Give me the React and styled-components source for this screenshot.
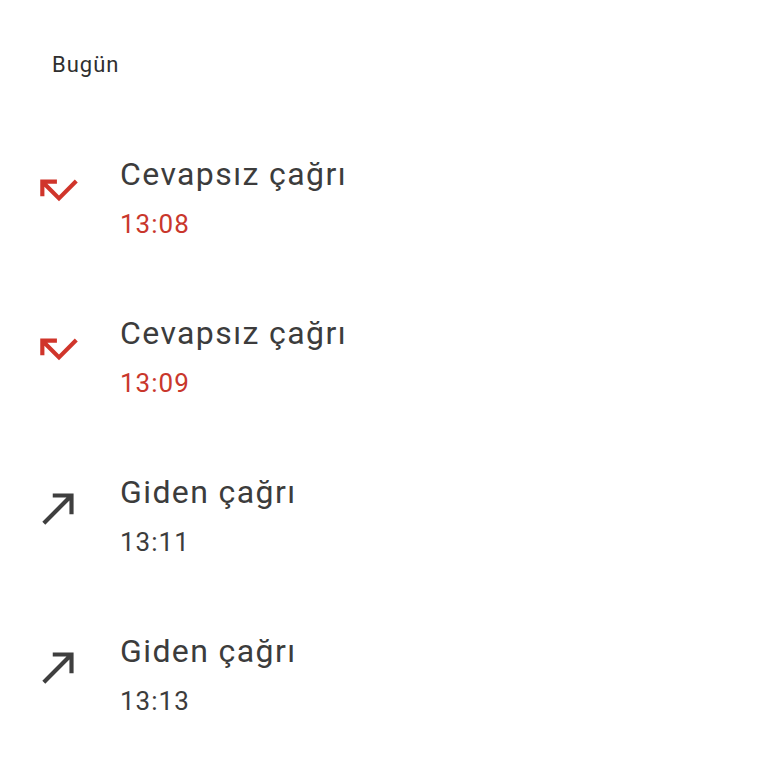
import React from 'react';
import styled, { createGlobalStyle } from 'styled-components';

const calls = [
  { type: 'missed', label: 'Cevapsız çağrı', time: '13:08' },
  { type: 'missed', label: 'Cevapsız çağrı', time: '13:09' },
  { type: 'outgoing', label: 'Giden çağrı', time: '13:11' },
  { type: 'outgoing', label: 'Giden çağrı', time: '13:13' },
];

function MissedIcon() {
  return (
    <svg viewBox="0 0 24 24" width="50" height="50" fill="#d0352b">
      <path d="M19.59 7L12 14.59 6.41 9H11V7H3v8h2v-4.59l7 7 9-9z" />
    </svg>
  );
}

function OutgoingIcon() {
  return (
    <svg viewBox="0 0 24 24" width="50" height="50" fill="#3f3f3f">
      <path d="M9 5v2h6.59L4 18.59 5.41 20 17 8.41V15h2V5z" />
    </svg>
  );
}

function App() {
  return (
    <>
      <GlobalStyle />
      <Page>
        <DayHeader>Bugün</DayHeader>
        <List>
          {calls.map((c, i) => (
            <Row key={i}>
              <IconBox>{c.type === 'missed' ? <MissedIcon /> : <OutgoingIcon />}</IconBox>
              <Texts>
                <Title>{c.label}</Title>
                <Time $missed={c.type === 'missed'}>{c.time}</Time>
              </Texts>
            </Row>
          ))}
        </List>
      </Page>
    </>
  );
}

const GlobalStyle = createGlobalStyle`
  body {
    margin: 0;
    background: #ffffff;
    font-family: Roboto, "Noto Sans", sans-serif;
  }
`;

const Page = styled.div`
  width: 768px;
  min-height: 768px;
  padding-top: 51px;
  box-sizing: border-box;
`;

const DayHeader = styled.div`
  padding-left: 52px;
  font-size: 22px;
  line-height: 28px;
  letter-spacing: 1px;
  color: #2f2f2f;
`;

const List = styled.div`
  margin-top: 40px;
  display: flex;
  flex-direction: column;
`;

const Row = styled.div`
  display: flex;
  align-items: flex-start;
  gap: 36px;
  height: 159px;
  padding: 35px 0 0 34px;
  box-sizing: border-box;
`;

const IconBox = styled.div`
  width: 50px;
  height: 50px;
  margin-top: 11px;
  flex-shrink: 0;
`;

const Texts = styled.div`
  display: flex;
  flex-direction: column;
  gap: 14px;
`;

const Title = styled.div`
  font-size: 32px;
  line-height: 40px;
  letter-spacing: 1.4px;
  color: #3c3c3c;
`;

const Time = styled.div`
  font-size: 26px;
  line-height: 32px;
  letter-spacing: 1px;
  color: ${(p) => (p.$missed ? '#c9372c' : '#3c3c3c')};
`;

export default App;
